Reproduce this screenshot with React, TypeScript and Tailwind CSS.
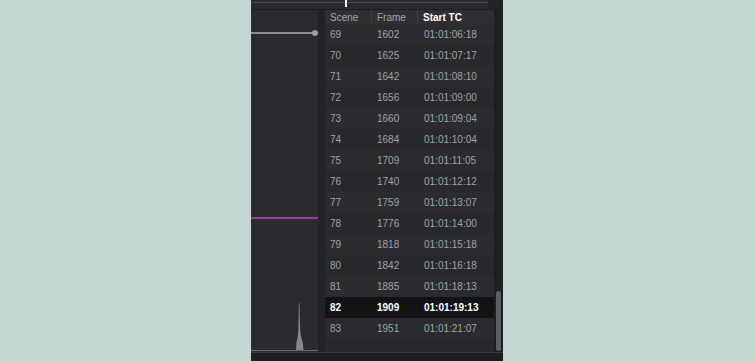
const ROWS: [number, number, string][] = [
  [69, 1602, '01:01:06:18'], [70, 1625, '01:01:07:17'], [71, 1642, '01:01:08:10'],
  [72, 1656, '01:01:09:00'], [73, 1660, '01:01:09:04'], [74, 1684, '01:01:10:04'],
  [75, 1709, '01:01:11:05'], [76, 1740, '01:01:12:12'], [77, 1759, '01:01:13:07'],
  [78, 1776, '01:01:14:00'], [79, 1818, '01:01:15:18'], [80, 1842, '01:01:16:18'],
  [81, 1885, '01:01:18:13'], [82, 1909, '01:01:19:13'], [83, 1951, '01:01:21:07'],
]

function Histogram() {
  return (
    <svg width="67" height="60" viewBox="0 0 67 60" className="block">
      <path d="M0 58 L45 58 L45.5 50 L46.5 46 L47.3 38 L47.8 12 L48.4 10 L48.9 30 L49.4 40 L50 44 L51 48 L52 52 L52.5 58 L67 58 L67 59 L0 59 Z" fill="#86878a" />
      <line x1="0" y1="58.5" x2="67" y2="58.5" stroke="#6a6b6d" strokeWidth="1" />
    </svg>
  )
}

export default function App() {
  return (
    <div className="w-[755px] h-[361px] bg-[#c5d6d2] pl-[251px] overflow-hidden" style={{ fontFamily: '"Liberation Sans", Arial, sans-serif' }}>
      <div className="w-[252px] h-full flex flex-col bg-[#232427]">
        {/* top ruler strip */}
        <div className="relative h-[10px] bg-[#2a2b2e] border-b border-[#1c1d1f]">
          <div className="absolute left-0 top-[2px] w-[237px] h-px bg-[#4a4b4f]" />
          <div className="absolute left-[94px] top-0 w-[2px] h-[7px] bg-white" />
          <div className="absolute right-0 top-0 w-[15px] h-full bg-[#222326]" />
        </div>

        <div className="flex flex-1 min-h-0">
          {/* viewer / scopes */}
          <div className="w-[67px] flex flex-col bg-[#2a2b2e]">
            <div className="h-[21px]" />
            <div className="flex items-center h-[3px]">
              <div className="flex-1 h-[2px] bg-[#8d8e90]" />
              <div className="w-[6px] h-[6px] rounded-full bg-[#9a9b9d] -ml-[3px] shrink-0" />
            </div>
            <div className="h-[183px]" />
            <div className="h-[2px] bg-[#a3339d]" />
            <div className="flex-1" />
            <Histogram />
          </div>

          <div className="w-[7px] bg-[#222326]" />

          {/* scene list */}
          <div className="w-[169px] flex flex-col bg-[#27282b] text-[10px] text-[#a0a1a3]">
            <div className="grid grid-cols-[47px_46px_76px] h-[14px] items-center bg-[#2e2f32] text-[#a4a5a7]">
              <div className="pl-[5px] border-r border-[#3e3f42] h-full flex items-center">Scene</div>
              <div className="pl-[5px] border-r border-[#3e3f42] h-full flex items-center">Frame</div>
              <div className="pl-[5px] font-bold text-white">Start TC</div>
            </div>
            {ROWS.map(([scene, frame, tc], i) => {
              const sel = scene === 82
              return (
                <div
                  key={scene}
                  className={`grid grid-cols-[47px_46px_76px] h-[21px] items-center ${sel ? 'bg-[#121314] text-white font-bold' : i % 2 === 0 ? 'bg-[#2b2c2f]' : 'bg-[#28292c]'}`}
                >
                  <div className="pl-[5px]">{scene}</div>
                  <div className="pl-[5px]">{frame}</div>
                  <div className="pl-[6px]">{tc}</div>
                </div>
              )
            })}
            <div className="flex-1 bg-[#28292c]" />
          </div>

          {/* scrollbar */}
          <div className="w-[9px] bg-[#1f2022] flex flex-col justify-end pb-[1px] pl-[2px]">
            <div className="w-[5px] h-[60px] rounded-full bg-[#5d5f63]" />
          </div>
        </div>

        <div className="h-[9px] bg-[#1e1f21] border-t border-[#3a3b3e]" />
      </div>
    </div>
  )
}
